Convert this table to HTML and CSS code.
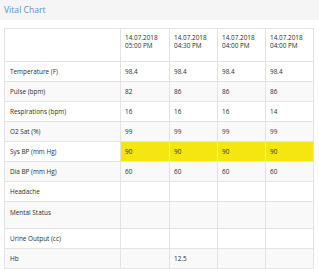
FILE: index.html
```
<!DOCTYPE html>
<html>
<head>
<meta charset="utf-8">
<link rel="stylesheet" href="styles.css">
</head>
<body>
<div class="panel-head"><span class="title">Vital Chart</span></div>
<div class="panel-body">
<table class="vitals">
<colgroup>
<col class="c-label"><col class="c-wide"><col class="c-data"><col class="c-data"><col class="c-data">
</colgroup>
<thead>
<tr class="head-row"><th></th><th>14.07.2018<br>05:00 PM</th><th>14.07.2018<br>04:30 PM</th><th>14.07.2018<br>04:00 PM</th><th>14.07.2018<br>04:00 PM</th></tr>
</thead>
<tbody>
<tr><td>Temperature (F)</td><td>98.4</td><td>98.4</td><td>98.4</td><td>98.4</td></tr>
<tr class="alt"><td>Pulse (bpm)</td><td>82</td><td>86</td><td>86</td><td>86</td></tr>
<tr><td>Respirations (bpm)</td><td>16</td><td>16</td><td>16</td><td>14</td></tr>
<tr class="alt"><td>O2 Sat (%)</td><td>99</td><td>99</td><td>99</td><td>99</td></tr>
<tr><td>Sys BP (mm Hg)</td><td class="hl">90</td><td class="hl">90</td><td class="hl">90</td><td class="hl">90</td></tr>
<tr class="alt"><td>Dia BP (mm Hg)</td><td>60</td><td>60</td><td>60</td><td>60</td></tr>
<tr><td>Headache</td><td></td><td></td><td></td><td></td></tr>
<tr class="alt tall"><td>Mental Status</td><td></td><td></td><td></td><td></td></tr>
<tr><td>Urine Output (cc)</td><td></td><td></td><td></td><td></td></tr>
<tr class="alt"><td>Hb</td><td></td><td>12.5</td><td></td><td></td></tr>
</tbody>
</table>
</div>
</body>
</html>
```
FILE: styles.css
```
html, body {
  margin: 0;
  padding: 0;
  background: #ffffff;
  font-family: "Open Sans", "DejaVu Sans", sans-serif;
}
.panel-head {
  height: 20px;
  background: #f5f5f5;
  display: flex;
  align-items: center;
  padding-left: 4px;
}
.title {
  color: #5b8ed6;
  font-size: 8.6px;
  line-height: 10px;
}
.panel-body {
  padding: 8px 0 0 4px;
}
.vitals {
  border-collapse: collapse;
  table-layout: fixed;
  width: 310px;
  font-size: 6.4px;
  color: #2e2e2e;
}
.c-label { width: 116px; }
.c-wide { width: 49px; }
.c-data { width: 48px; }
.vitals th, .vitals td {
  border: 1px solid #e3e3e3;
  padding: 0 4px;
  text-align: left;
  font-weight: normal;
  line-height: 8px;
  height: 20px;
  vertical-align: middle;
  box-sizing: border-box;
}
.vitals td:first-child { padding-left: 5px; }
.head-row th {
  height: 33px;
  vertical-align: top;
  padding-top: 5px;
}
.alt td { background: #f9f9f9; }
.tall td {
  height: 27px;
  vertical-align: top;
  padding-top: 7px;
}
.vitals td.hl { background: #f5e611; }
```
